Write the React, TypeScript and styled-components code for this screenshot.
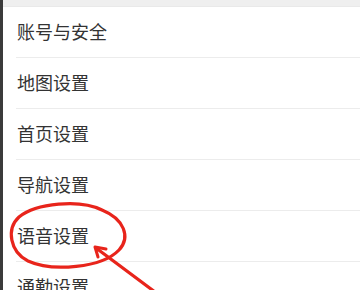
import styled, { createGlobalStyle } from "styled-components";

const GlobalStyle = createGlobalStyle`
  html, body {
    margin: 0;
    padding: 0;
    background: #fff;
  }
  body {
    font-family: "Noto Sans CJK SC", "Noto Sans", sans-serif;
  }
`;

const Screen = styled.div`
  position: relative;
  width: 360px;
  height: 290px;
  overflow: hidden;
  display: flex;
  background: #fff;
`;

const Edge = styled.div`
  width: 3px;
  flex: none;
  background: #3b3b3b;
`;

const Content = styled.div`
  flex: 1;
  display: flex;
  flex-direction: column;
`;

const TopBar = styled.div`
  height: 7px;
  flex: none;
  background: #efefef;
  border-bottom: 1px solid #e9e9e9;
  box-sizing: border-box;
`;

const List = styled.div`
  display: flex;
  flex-direction: column;
  padding-left: 13px;
`;

const Row = styled.div`
  height: 51px;
  flex: none;
  box-sizing: border-box;
  display: flex;
  align-items: center;
  border-bottom: 1px solid #ececec;
  font-size: 18px;
  line-height: 1;
  color: #333;
  padding: 0 0 2px 1px;
`;

const Annotation = styled.svg`
  position: absolute;
  left: 0;
  top: 0;
  pointer-events: none;
`;

const items = ["账号与安全", "地图设置", "首页设置", "导航设置", "语音设置", "通勤设置"];

export default function App() {
  return (
    <>
      <GlobalStyle />
      <Screen>
        <Edge />
        <Content>
          <TopBar />
          <List>
            {items.map((label) => (
              <Row key={label}>{label}</Row>
            ))}
          </List>
        </Content>
        <Annotation width="360" height="290" viewBox="0 0 360 290">
          <path
            d="M 102 210 C 80 199, 36 203, 19 217 C 6 229, 10 252, 28 261 C 52 272, 102 268, 119 250 C 131 237, 124 219, 102 210"
            fill="none"
            stroke="#e8241b"
            strokeWidth="3.2"
            strokeLinecap="round"
          />
          <path
            d="M 155 292 L 96 248"
            stroke="#e8241b"
            strokeWidth="3.2"
            strokeLinecap="round"
          />
          <path
            d="M 106 249 L 95 247 L 98 257"
            fill="none"
            stroke="#e8241b"
            strokeWidth="3"
            strokeLinecap="round"
            strokeLinejoin="round"
          />
        </Annotation>
      </Screen>
    </>
  );
}
